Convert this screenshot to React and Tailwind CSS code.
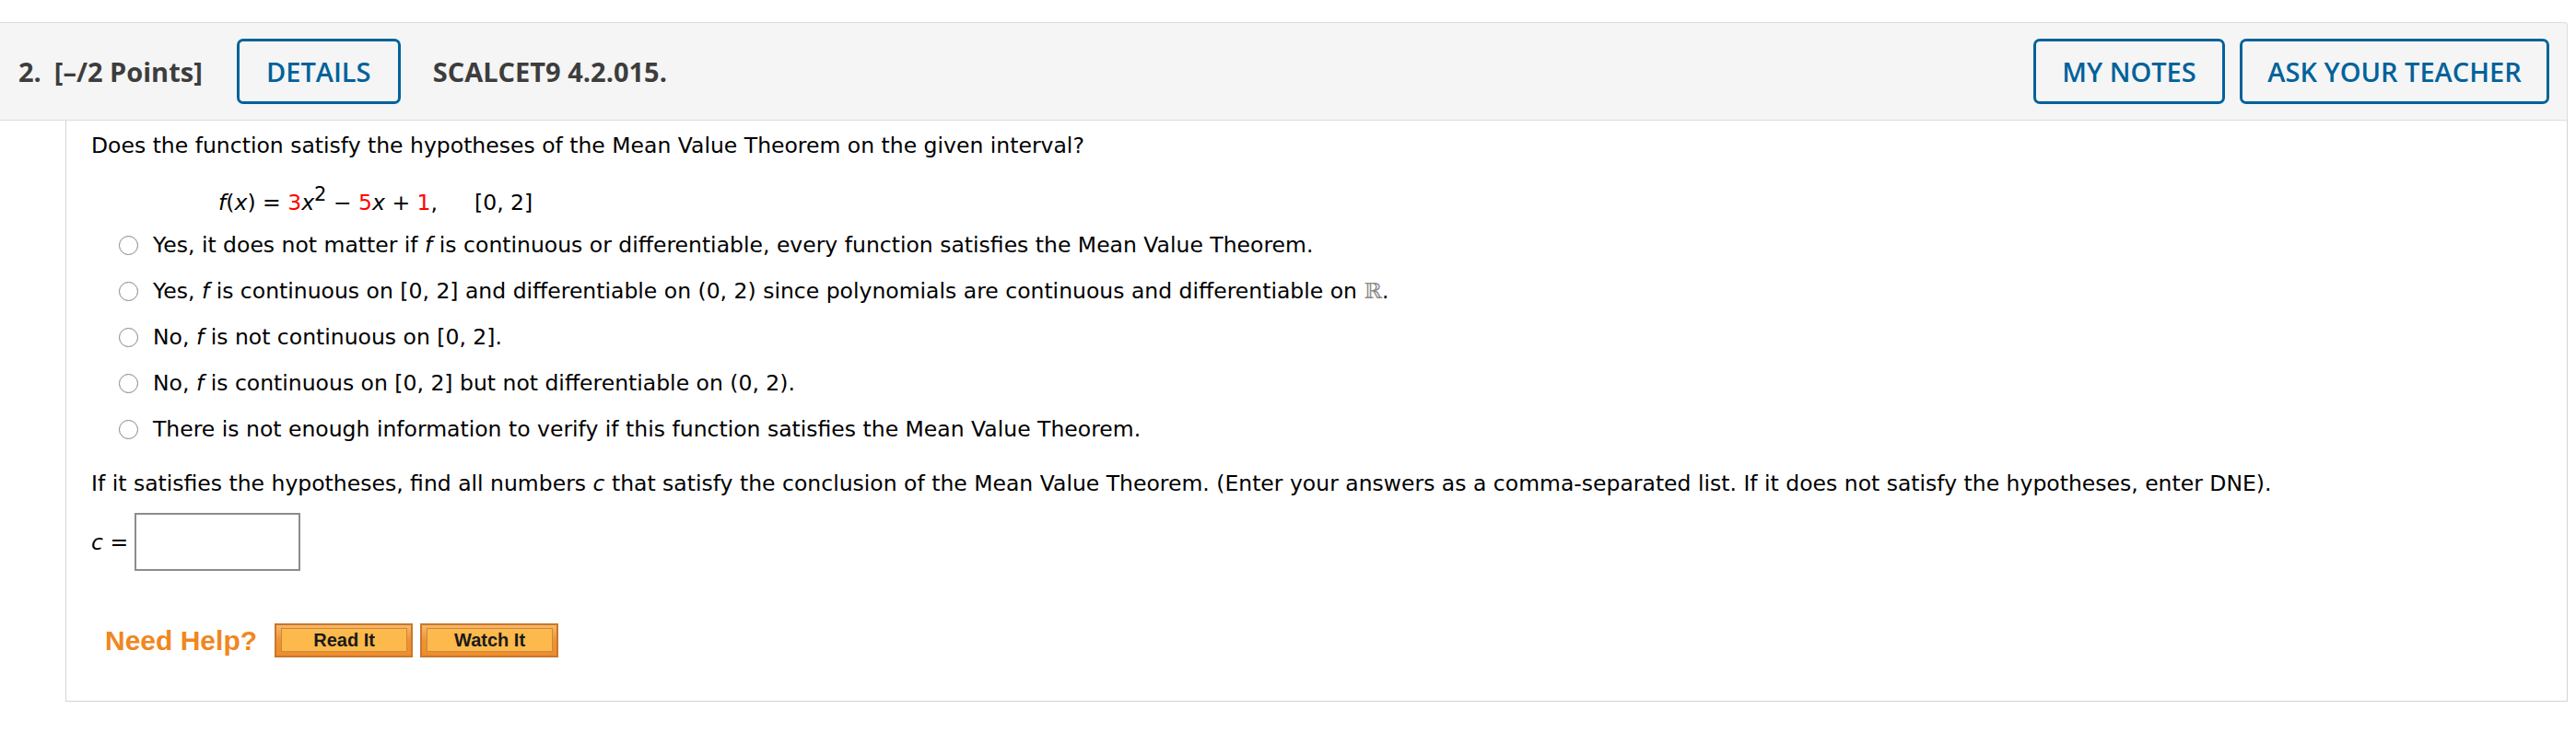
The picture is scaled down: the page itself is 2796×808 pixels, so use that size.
const blue = 'border-[#00629b] text-[#00629b]';

function Radio() {
    return <span className="inline-block w-[21px] h-[21px] rounded-full border-[1.5px] border-[#858585] bg-white shrink-0" />;
}

function Option({ children }) {
    return (
        <div className="h-[50px] flex items-center pl-[30px]">
            <Radio />
            <span className="ml-[16px]">{children}</span>
        </div>
    );
}

function HelpButton({ label }) {
    return (
        <button
            type="button"
            className="w-[150px] h-[37px] border-2 border-[#c8772e] bg-gradient-to-b from-[#f8b867] via-[#f29233] to-[#ef8c2c] pt-[3px] pb-[4px] pl-[5px] pr-[4px]"
        >
            <span className="flex h-full items-center justify-center border border-[#c48a44] bg-[#fdb94b] text-[20px] font-bold text-[#1a1a1a] font-['Liberation_Sans',Arial,sans-serif]">
                {label}
            </span>
        </button>
    );
}

export default function App() {
    return (
        <div className="w-[2796px] h-[808px] bg-white pt-[24px]">
            {/* Question header */}
            <div className="w-[2787px] h-[107px] bg-[#f5f5f5] border-y border-r border-[#dcdcdc] rounded-tr-[3px] flex items-center font-['Open_Sans',sans-serif] text-[29px] text-[#3d3d3d]">
                <span className="pl-[20px] font-bold">2.</span>
                <span className="ml-[14px] font-bold">[–/2 Points]</span>
                <button type="button" className={`ml-[37px] h-[71px] w-[178px] border-[3px] rounded-[7px] font-semibold ${blue}`}>
                    DETAILS
                </button>
                <span className="ml-[35px] font-bold">SCALCET9 4.2.015.</span>
                <div className="ml-auto mr-[19px] flex gap-[16px]">
                    <button type="button" className={`w-[208px] h-[71px] border-[3px] rounded-[7px] font-semibold ${blue}`}>
                        MY NOTES
                    </button>
                    <button type="button" className={`w-[336px] h-[71px] border-[3px] rounded-[7px] font-semibold ${blue}`}>
                        ASK YOUR TEACHER
                    </button>
                </div>
            </div>

            {/* Question body */}
            <div className="ml-[71px] w-[2716px] border-x border-b border-[#d4d4d4] pl-[27px] pt-[11px] pb-[47px] font-['DejaVu_Sans',Verdana,sans-serif] text-[23.5px] leading-[32px] text-black">
                <p>Does the function satisfy the hypotheses of the Mean Value Theorem on the given interval?</p>

                <p className="mt-[30px] pl-[138px]">
                    <i>f</i>(<i>x</i>) = <span className="text-[#ff0000]">3</span><i>x</i>
                    <sup className="text-[21px]">2</sup> − <span className="text-[#ff0000]">5</span><i>x</i> + <span className="text-[#ff0000]">1</span>,
                    <span className="ml-[40px]">[0, 2]</span>
                </p>

                <div className="mt-[5px]">
                    <Option>Yes, it does not matter if <i>f</i> is continuous or differentiable, every function satisfies the Mean Value Theorem.</Option>
                    <Option>
                        Yes, <i>f</i> is continuous on [0, 2] and differentiable on (0, 2) since polynomials are continuous and differentiable on{' '}
                        <span className="font-['DejaVu_Serif',serif] text-[#8a8a8a]">ℝ</span>.
                    </Option>
                    <Option>No, <i>f</i> is not continuous on [0, 2].</Option>
                    <Option>No, <i>f</i> is continuous on [0, 2] but not differentiable on (0, 2).</Option>
                    <Option>There is not enough information to verify if this function satisfies the Mean Value Theorem.</Option>
                </div>

                <p className="mt-[18px]">
                    If it satisfies the hypotheses, find all numbers <i>c</i> that satisfy the conclusion of the Mean Value Theorem. (Enter your answers as a comma-separated list. If it does not satisfy the hypotheses, enter DNE).
                </p>

                <div className="mt-[16px] flex items-center">
                    <span className="w-[47px]"><i>c</i> =</span>
                    <input type="text" className="w-[180px] h-[63px] border-2 border-[#8c8c8c] bg-white outline-none" />
                </div>

                <div className="mt-[57px] pl-[15px] flex items-center">
                    <span className="font-['Liberation_Sans',Arial,sans-serif] font-bold text-[30px] leading-[37px] text-[#f0871f]">Need Help?</span>
                    <div className="ml-[19px] flex gap-[8px]">
                        <HelpButton label="Read It" />
                        <HelpButton label="Watch It" />
                    </div>
                </div>
            </div>
        </div>
    );
}
